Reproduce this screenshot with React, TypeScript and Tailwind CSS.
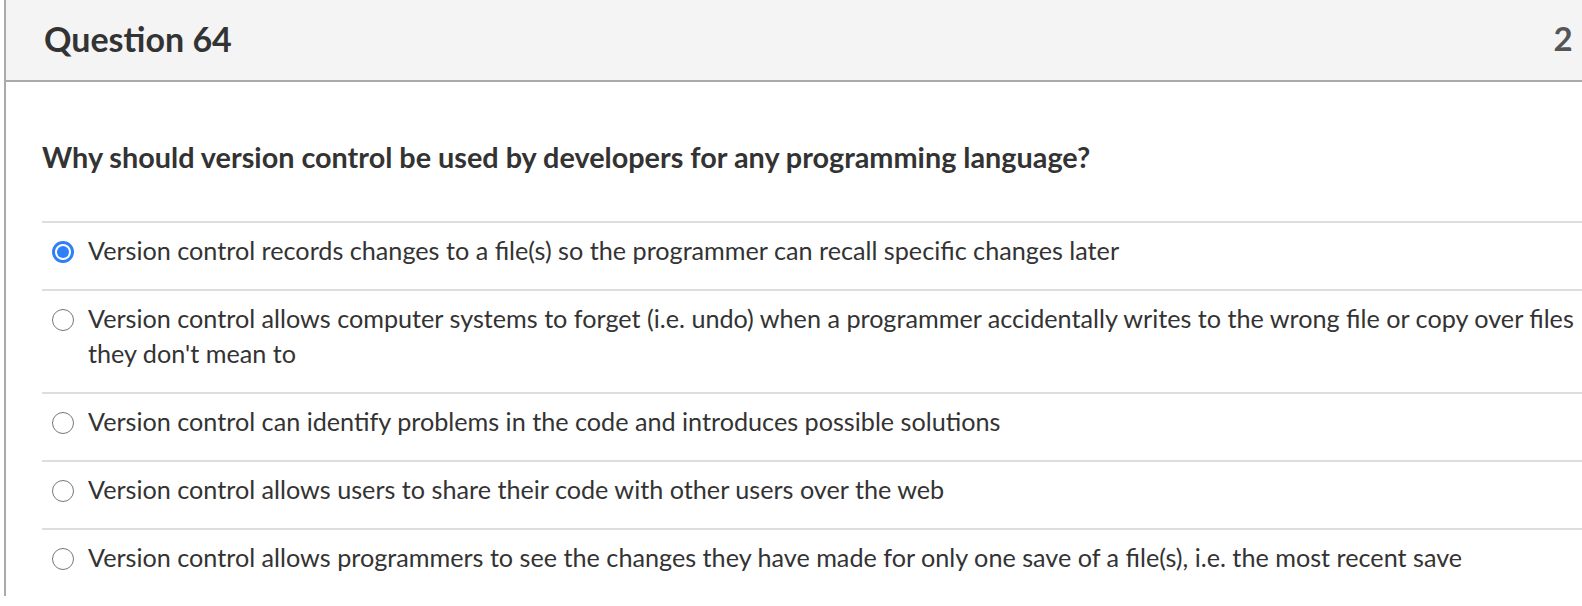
const answers = [
  {
    text: "Version control records changes to a file(s) so the programmer can recall specific changes later",
    selected: true,
  },
  {
    text: "Version control allows computer systems to forget (i.e. undo) when a programmer accidentally writes to the wrong file or copy over files they don't mean to",
    selected: false,
  },
  {
    text: "Version control can identify problems in the code and introduces possible solutions",
    selected: false,
  },
  {
    text: "Version control allows users to share their code with other users over the web",
    selected: false,
  },
  {
    text: "Version control allows programmers to see the changes they have made for only one save of a file(s), i.e. the most recent save",
    selected: false,
  },
];

const Radio = ({ checked }: { checked: boolean }) =>
  checked ? (
    <span className="mt-[8px] flex h-[22px] w-[22px] shrink-0 items-center justify-center rounded-full border-[3px] border-[#2f80f7] bg-white">
      <span className="h-[12px] w-[12px] rounded-full bg-[#2f80f7]" />
    </span>
  ) : (
    <span className="mt-[8px] h-[22px] w-[22px] shrink-0 rounded-full border-[1.5px] border-[#777] bg-white" />
  );

export default function App() {
  return (
    <div className="h-[606px] w-[1582px] overflow-hidden bg-white font-['Lato','Noto_Sans',sans-serif] text-[#333]">
      <div className="ml-[4px] w-[1680px] border-l-2 border-[#aaa]">
        {/* header */}
        <div className="flex h-[82px] items-center justify-between border-b-2 border-[#aaa] bg-[#f4f4f4] pb-[2px] pl-[38px] pr-[58px]">
          <h2 className="text-[34px] font-bold leading-none">Question 64</h2>
          <span className="text-[33px] font-bold text-[#555]">2 pts</span>
        </div>

        {/* question */}
        <div className="pl-[36px]">
          <p className="mt-[57px] text-[28.8px] font-bold leading-[36px]">
            Why should version control be used by developers for any programming language?
          </p>

          <div className="mt-[46px]">
            {answers.map((a, i) => (
              <label
                key={i}
                className="flex gap-[14px] border-t-2 border-[#ddd] pb-[21px] pl-[10px] pr-[100px] pt-[10px]"
              >
                <Radio checked={a.selected} />
                <span className="text-[25.2px] leading-[35px]">{a.text}</span>
              </label>
            ))}
          </div>
        </div>
      </div>
    </div>
  );
}
